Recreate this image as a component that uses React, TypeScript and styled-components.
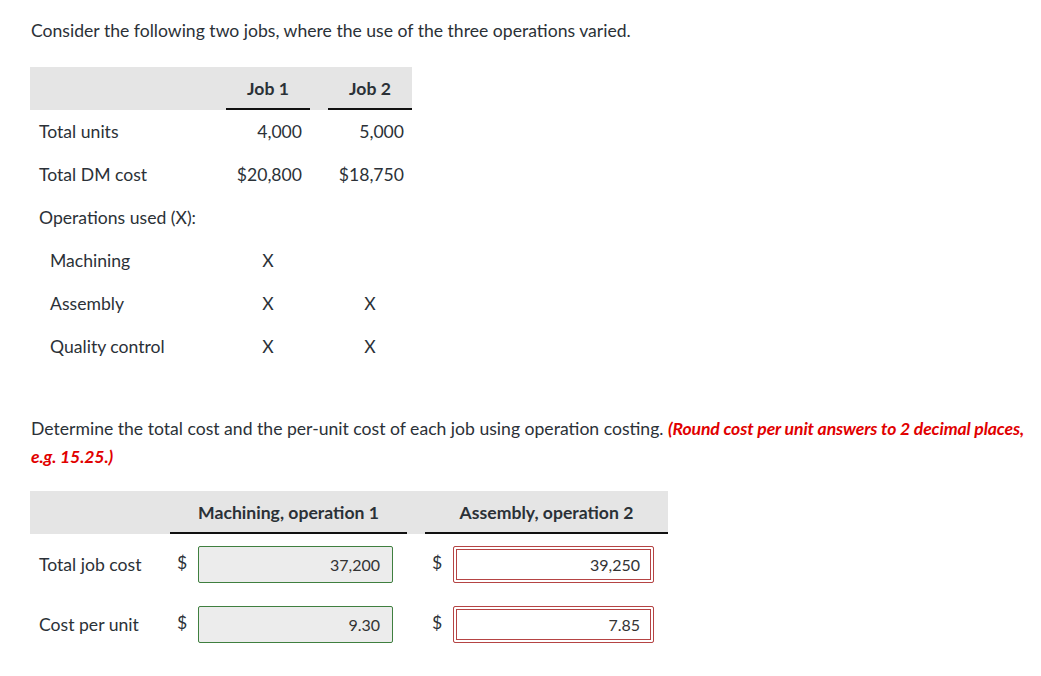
import React from 'react';
import styled, { createGlobalStyle } from 'styled-components';

const GlobalStyle = createGlobalStyle`
  body {
    margin: 0;
    background: #fff;
    font-family: Lato, "Open Sans", sans-serif;
    color: #2b3137;
  }
`;

// Page wrapper with the question's outer spacing.
const Page = styled.div`
  padding: 19px 0 20px 31px;
  font-size: 17.6px;
`;

const Para = styled.p`
  margin: 0;
  line-height: 24px;
  max-width: 1006px;
`;

const Hint = styled.span`
  color: #e10000;
  font-weight: 700;
  font-style: italic;
  letter-spacing: -0.12px;
`;

// First table: label column plus two job columns.
const JobGrid = styled.div`
  display: grid;
  grid-template-columns: 196px 84px 18px 84px;
  grid-auto-rows: 43px;
  width: 382px;
  margin: 24px 0 0 -1px;
`;

const HeadCell = styled.div<{ $line?: boolean }>`
  background: #e5e5e5;
  display: flex;
  align-items: center;
  justify-content: center;
  font-weight: 700;
  color: #2b3137;
  border-bottom: ${(p) => (p.$line ? '2px solid #111' : 'none')};
  box-sizing: border-box;
  padding-top: ${(p) => (p.$line ? '2px' : '0')};
  white-space: nowrap;
`;

const Label = styled.div<{ $indent?: boolean }>`
  display: flex;
  align-items: center;
  padding-left: ${(p) => (p.$indent ? '20px' : '9px')};
  white-space: nowrap;
`;

const Num = styled.div`
  display: flex;
  align-items: center;
  justify-content: flex-end;
  padding-right: 8px;
`;

const Mark = styled.div`
  display: flex;
  align-items: center;
  justify-content: center;
`;

const Spacer = styled.div``;

const Question = styled(Para)`
  margin-top: 47px;
  line-height: 28px;
`;

// Second table: answer inputs for each operation.
const AnswerGrid = styled.div`
  display: grid;
  grid-template-columns: 140px 237px 18px 243px;
  grid-template-rows: 43px 60px 60px;
  width: 638px;
  margin: 20px 0 0 -1px;
`;

const AnswerCell = styled.div`
  display: flex;
  align-items: center;
  padding: 0 14px 0 7px;
`;

const Dollar = styled.span`
  width: 21px;
  margin-top: -3px;
`;

const Field = styled.div<{ $wrong?: boolean }>`
  flex: 1;
  height: 37px;
  box-sizing: border-box;
  display: flex;
  align-items: center;
  justify-content: flex-end;
  font-size: 16px;
  color: #333;
  border-radius: 2px;
  padding-right: ${(p) => (p.$wrong ? '13px' : '12px')};
  background: ${(p) => (p.$wrong ? '#fff' : '#ececec')};
  border: ${(p) => (p.$wrong ? '1px solid #b54444' : '1px solid #3f7f3f')};
  box-shadow: ${(p) => (p.$wrong ? 'inset 0 0 0 2px #fff, inset 0 0 0 3px #b54444' : 'none')};
`;

const ops = [
  { name: 'Machining', job1: true, job2: false },
  { name: 'Assembly', job1: true, job2: true },
  { name: 'Quality control', job1: true, job2: true },
];

const answers = [
  { label: 'Total job cost', op1: '37,200', op2: '39,250' },
  { label: 'Cost per unit', op1: '9.30', op2: '7.85' },
];

export default function App() {
  return (
    <Page>
      <GlobalStyle />
      <Para>Consider the following two jobs, where the use of the three operations varied.</Para>

      <JobGrid>
        <HeadCell />
        <HeadCell $line>Job 1</HeadCell>
        <HeadCell />
        <HeadCell $line>Job 2</HeadCell>

        <Label>Total units</Label>
        <Num>4,000</Num>
        <Spacer />
        <Num>5,000</Num>

        <Label>Total DM cost</Label>
        <Num>$20,800</Num>
        <Spacer />
        <Num>$18,750</Num>

        <Label>Operations used (X):</Label>
        <Spacer />
        <Spacer />
        <Spacer />

        {ops.map((op) => (
          <React.Fragment key={op.name}>
            <Label $indent>{op.name}</Label>
            <Mark>{op.job1 ? 'X' : ''}</Mark>
            <Spacer />
            <Mark>{op.job2 ? 'X' : ''}</Mark>
          </React.Fragment>
        ))}
      </JobGrid>

      <Question>
        Determine the total cost and the per-unit cost of each job using operation costing.{' '}
        <Hint>(Round cost per unit answers to 2 decimal places, e.g. 15.25.)</Hint>
      </Question>

      <AnswerGrid>
        <HeadCell />
        <HeadCell $line>Machining, operation 1</HeadCell>
        <HeadCell />
        <HeadCell $line>Assembly, operation 2</HeadCell>

        {answers.map((a) => (
          <React.Fragment key={a.label}>
            <Label>{a.label}</Label>
            <AnswerCell>
              <Dollar>$</Dollar>
              <Field>{a.op1}</Field>
            </AnswerCell>
            <Spacer />
            <AnswerCell>
              <Dollar>$</Dollar>
              <Field $wrong>{a.op2}</Field>
            </AnswerCell>
          </React.Fragment>
        ))}
      </AnswerGrid>
    </Page>
  );
}
